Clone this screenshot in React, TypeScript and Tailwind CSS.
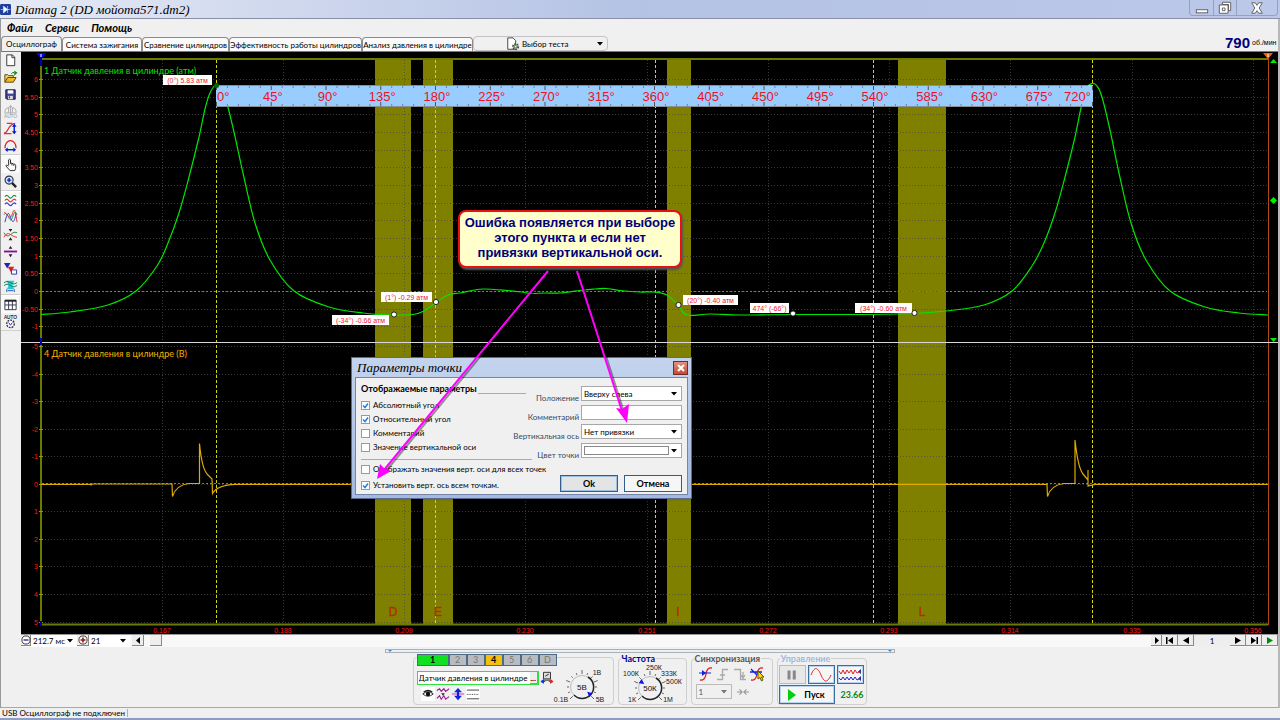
import { useState, type ReactNode } from "react";

type Pt = [number, number];

const X_GRID = [162, 283, 404, 525, 647, 768, 889, 1010, 1132, 1253];
const X_LABELS = ["0.167", "0.188", "0.209", "0.230", "0.251", "0.272", "0.293", "0.314", "0.335", "0.356"];
const BANDS = [
  { x: 375, w: 36, name: "D", tx: 393 },
  { x: 423, w: 30, name: "E", tx: 438 },
  { x: 667, w: 24, name: "I", tx: 678 },
  { x: 898, w: 48, name: "L", tx: 922 },
];
const CURSORS = [216.5, 435.5, 655.5, 873.5, 1092.5];
const upperRows = Array.from({ length: 15 }, (_, i) => {
  const v = 6 - i * 0.5;
  return { y: 79 + i * 17.67, label: Number.isInteger(v) ? String(v) : v.toFixed(2) };
});
const lowerRows = Array.from({ length: 11 }, (_, i) => ({ y: 346 + i * 27.55, label: String(i - 5) }));

const PRESSURE: Pt[] = [
  [41, 314.5], [70, 312], [108, 305], [136, 291], [157, 266], [168, 243], [179, 213], [188, 181], [199, 137],
  [205, 109], [210, 93], [216, 85], [222, 91], [226, 100], [234, 132], [243, 173], [255, 223], [270, 260],
  [294, 291], [329, 307], [363, 313], [393, 315], [413, 314.5], [424, 311], [434, 304], [448, 295], [460, 293], [472, 290.5],
  [484, 289], [507, 290.5], [522, 292], [531, 293.5], [545, 293], [560, 293], [583, 290], [594, 289], [606, 288.5], [620, 290.5],
  [640, 292], [655, 292], [667, 295], [678, 305], [687, 315], [710, 314], [740, 315], [793, 314.5], [850, 314.5],
  [914, 313.5], [946, 311], [984, 305], [1012, 291], [1032, 266], [1044, 243], [1055, 213], [1064, 181], [1075, 137],
  [1081, 108], [1087, 88], [1092, 83.5], [1097, 86], [1102, 97], [1110, 130], [1119, 173], [1131, 223], [1146, 260],
  [1170, 291], [1205, 307], [1239, 313], [1268, 315],
];

function smooth(p: Pt[]) {
  let d = `M${p[0][0]} ${p[0][1]}`;
  for (let i = 0; i < p.length - 1; i++) {
    const a = p[Math.max(0, i - 1)], b = p[i], c = p[i + 1], e = p[Math.min(p.length - 1, i + 2)];
    d += `C${b[0] + (c[0] - a[0]) / 6} ${b[1] + (c[1] - a[1]) / 6} ${c[0] - (e[0] - b[0]) / 6} ${c[1] - (e[1] - b[1]) / 6} ${c[0]} ${c[1]}`;
  }
  return d;
}

const TAGS = [
  { x: 163, y: 75, w: 49, t: "(0°) 5.83 атм" },
  { x: 381, y: 292, w: 51, t: "(1°) -0.29 атм" },
  { x: 332, y: 315, w: 57, t: "(-34°) -0.66 атм" },
  { x: 683, y: 295, w: 55, t: "(20°) -0.40 атм" },
  { x: 750, y: 303, w: 39, t: "474° (-66°)" },
  { x: 855, y: 303, w: 57, t: "(34°) -0.60 атм" },
];

function Chart() {
  return (
    <svg viewBox="21 52 1257 582" className="block h-auto w-full bg-black font-['Liberation_Sans',sans-serif]" role="img" aria-label="Осциллограмма">
      {BANDS.map((b) => (
        <rect key={b.name} x={b.x} y={59} width={b.w} height={566} fill="#808000" />
      ))}
      <g stroke="#4a4a4a" strokeDasharray="1 2" shapeRendering="crispEdges" opacity="0.75">
        {X_GRID.map((x) => <path key={x} d={`M${x + 0.5} 60V624`} />)}
        {[...upperRows, ...lowerRows].map((r) => <path key={r.y} d={`M42 ${Math.round(r.y) + 0.5}H1267`} />)}
      </g>
      <path d="M42 291.5H1267M42 483.5H1267" stroke="#8a8a00" strokeDasharray="2 2" shapeRendering="crispEdges" />
      <path d={CURSORS.map((x) => `M${x} 60V624`).join("")} stroke="#d6d600" strokeDasharray="3 2" shapeRendering="crispEdges" />
      <path d="M41 59V624.5H1268" fill="none" stroke="#6b7a00" strokeWidth="2" />
      <path d="M41 59H1268" stroke="#707c00" strokeWidth="2" />
      <path d="M1268.5 58V625" stroke="#b04a10" />
      <g stroke="#8a9a00">
        {[...upperRows, ...lowerRows].map((r) => <path key={r.y} d={`M39 ${Math.round(r.y) + 0.5}H43`} />)}
      </g>
      <g fill="#ff1818" fontSize="7" textAnchor="end">
        {[...upperRows, ...lowerRows].map((r) => <text key={r.y} x="38" y={r.y + 3}>{r.label}</text>)}
      </g>
      <g fill="#ff1818" fontSize="7" textAnchor="middle">
        {X_GRID.map((x, i) => <text key={x} x={x} y="633">{X_LABELS[i]}</text>)}
      </g>
      <g fill="#b03000" stroke="#b03000" strokeWidth="0.4" fontSize="12" textAnchor="middle">
        {BANDS.map((b) => <text key={b.name} x={b.tx} y="616">{b.name}</text>)}
      </g>
      <path d={smooth(PRESSURE)} fill="none" stroke="#00e600" strokeWidth="1.2" />
      <path
        d="M41 484.3H90L91 485L92 484H172L172.5 496.5Q176 485 189 483.5H199.5V443.5Q202 470 208 475L212 479L212.5 493.5Q217 485 236 484.3H1047L1047.5 496.5Q1051 485 1064 483.5H1075V440Q1078 468 1083 474L1088 480V470V486L1095 484.3H1268"
        fill="none" stroke="#e0aa00" strokeWidth="1.2"
      />
      <path d="M21 342.5H1278" stroke="#d8d8d8" />
      <g fontSize="9" className="font-['Lato',sans-serif]">
        <text x="44" y="74" fill="#00e400">1 Датчик давления в цилиндре (атм)</text>
        <text x="44" y="357" fill="#f0b400">4 Датчик давления в цилиндре (В)</text>
      </g>
      <rect x="216" y="85" width="877" height="22" fill="#99ccff" />
      <path d="M216 85.5H1088M216 106.5H1092" stroke="#8a8f96" />
      <g stroke="#555">
        {Array.from({ length: 81 }, (_, i) => {
          const x = 216.5 + i * 10.95;
          const l = i % 5 === 0 ? 4 : 2;
          return <path key={i} d={`M${x} 86v${l}M${x} 106v${-l}`} opacity={i % 5 === 0 ? 1 : 0.6} />;
        })}
      </g>
      <g fill="#f01020" fontSize="13">
        {Array.from({ length: 17 }, (_, i) => (
          <text key={i} x={i === 0 ? 217 : i === 16 ? 1091 : 218 + i * 54.75} y="101" textAnchor={i === 0 ? "start" : i === 16 ? "end" : "middle"}>
            {i * 45}°
          </text>
        ))}
      </g>
      <circle cx="216.5" cy="85.5" r="2.5" fill="#006400" />
      {TAGS.map((t) => (
        <g key={t.t}>
          <rect x={t.x} y={t.y} width={t.w} height="10" fill="#fff" />
          <text x={t.x + t.w / 2} y={t.y + 8} fontSize="7" fill="#f02030" textAnchor="middle">{t.t}</text>
        </g>
      ))}
      <g fill="#fff" stroke="#222">
        {[[394, 314.5], [436, 302], [678.5, 305], [793, 313.5], [914.5, 313]].map(([x, y]) => <circle key={x} cx={x} cy={y} r="2.6" />)}
      </g>
      <path d="M36 53H46L41 59Z" fill="#0000ff" />
      <path d="M41 58V66M41 338V345M41 621V626" stroke="#0000b0" strokeWidth="2" />
      <path d="M41 54V57" stroke="#fff" />
      <path d="M1263 53H1273L1268 59Z" fill="#f06010" />
      <path d="M1268 54V57" stroke="#fff" />
      <path d="M1270 63L1273.5 59L1277 63ZM1273.5 197L1277 200.5L1273.5 204L1270 200.5ZM1270 338H1277L1273.5 342Z" fill="#00ee00" />
    </svg>
  );
}

const wave = (y: number, a = 3) => `M2 ${y}q2-${a} 4 0t4 0t4 0`;

const TOOLS: { label: string; on?: boolean; icon: ReactNode }[][] = [
  [
    { label: "Новый", icon: <path d="M4 2H10L12.500 4.500V13.500H4ZM9.500 2V5H12.500" fill="#fff" stroke="#333" /> },
    { label: "Открыть", icon: <><path d="M2 13V5H5L6 6H11V8" fill="#f4d66a" stroke="#5a4600" /><path d="M2 13L5 8H14L11 13Z" fill="#f0b830" stroke="#5a4600" /><path d="M9 4Q10 2 12 3" stroke="#333" /><path d="M12 0.500L15.500 3L12 6Z" fill="#00a000" /></> },
    { label: "Сохранить", icon: <><path d="M3 3H13V13H4L3 12Z" fill="#44449a" stroke="#101040" /><path d="M5 3.500H11V7H5Z" fill="#fff" /><path d="M5.500 9.500H10.500V13H5.500Z" fill="#ddd" /><path d="M7 10V12" stroke="#222" /></> },
    { label: "Авто", icon: <><path d="M2 9Q2 4 6 4V9M14 9Q14 4 10 4V9M8 11V2M6 4L8 1.500L10 4M1.500 9.500H14.500" stroke="#aaa" /><text x="8" y="15" fontSize="5" fill="#999" textAnchor="middle">AUTO</text></> },
    { label: "Масштаб по вертикали", icon: <><path d="M1 13C6 13 5 3 13 2.500M4 2.500H10M1 13.500H9" stroke="#e03030" strokeWidth="1.300" /><path d="M12 4V13" stroke="#0020d0" strokeWidth="1.500" /><path d="M9.500 6L12 3L14.500 6ZM9.500 11L12 14L14.500 11Z" fill="#0020d0" /></> },
    { label: "Масштаб по горизонтали", icon: <><path d="M2 11C2 0 14 0 14 11" stroke="#e02020" strokeWidth="1.300" /><path d="M4 12.500H12" stroke="#0020d0" strokeWidth="1.500" /><path d="M5 10L2 12.500L5 15ZM11 10L14 12.500L11 15Z" fill="#0020d0" /></> },
  ],
  [
    { label: "Рука", on: true, icon: <path d="M6 9V3Q7 1.500 8 3V7L9.500 6.500L11 7.500L12.500 7.500L13.500 9V12L12.500 14.500H7.500L3 9.500Q3.500 8 5 9L6 10M9.500 7V9M11.500 8V9.500" fill="#fff" stroke="#222" /> },
    { label: "Лупа", icon: <><path d="M9.500 9.500L14 14" stroke="#222" strokeWidth="2.500" /><circle cx="6.500" cy="6.500" r="4.300" fill="#c8e8ff" stroke="#334" strokeWidth="1.200" /><path d="M6.500 4.300V8.700M4.300 6.500H8.700" stroke="#1020b0" strokeWidth="1.500" /></> },
  ],
  [
    { label: "Раздельно", on: true, icon: <><path d={wave(4)} stroke="#209040" strokeWidth="1.300" /><path d={wave(8)} stroke="#e03030" strokeWidth="1.300" /><path d={wave(12)} stroke="#3030d0" strokeWidth="1.300" /></> },
    { label: "Вместе", icon: <><path d="M1 5C5-1 7 17 10 8S13 3 15 5" stroke="#209040" /><path d="M1 3C4 1 7 14 10 4S14 8 15 13" stroke="#e03030" /><path d="M2 13C5 1 6 2 8 8S12 15 14 3" stroke="#3030d0" /></> },
    { label: "Центрировать", icon: <><path d="M1 6Q4 12 8 8T15 6" stroke="#209040" /><path d="M1 11Q4 5 8 8T15 11" stroke="#e03030" /><path d="M6 2H10L8 5ZM6 14H10L8 11Z" fill="#222" /></> },
    { label: "Разделитель", icon: <><path d="M1 8H15" stroke="#8a10a0" strokeWidth="2" /><path d="M6 5H10L8 2ZM6 11H10L8 14Z" fill="#222" /></> },
    { label: "Маркеры", icon: <><path d="M1 2H8L4.500 8Z" fill="#2020c0" /><path d="M5 6H12L8.500 12Z" fill="#e02020" /><path d="M9 9.500H14.500V14H9Z" fill="#fff" stroke="#3030b0" /></> },
    { label: "Диапазон", icon: <><path d="M4 3H12L10 8L12 12H4L6 8Z" fill="#20c8d8" /><path d="M1 5Q4 2 8 5T15 5M1 8Q4 5 8 8T15 8" stroke="#108050" /><path d="M4 12V15M12 12V15M5 13.500H11" stroke="#2050c0" /></> },
  ],
  [
    { label: "Таблица", on: true, icon: <><path d="M2 3.500H14V13.500H2ZM6 3.500V13.500M10 3.500V13.500M2 8.500H14" fill="#fff" stroke="#334" /><path d="M2 4H14" stroke="#223" strokeWidth="2" /></> },
    { label: "Автоизмерение", icon: <><text x="8" y="5" fontSize="5" fontWeight="700" fill="#222" textAnchor="middle">AUTO</text><circle cx="8" cy="10.500" r="4" fill="#fff" stroke="#333" strokeWidth="1.500" strokeDasharray="2 1" /><path d="M6 9L8 12L10 9" stroke="#2020d0" /></> },
  ],
];

function Icon({ children, className = "size-4" }: { children: ReactNode; className?: string }) {
  return <svg viewBox="0 0 16 16" fill="none" className={`${className} shrink-0`} aria-hidden="true">{children}</svg>;
}

function Caret({ className = "" }: { className?: string }) {
  return <svg viewBox="0 0 6 4" className={`pointer-events-none absolute top-1/2 right-1 h-1 w-1.5 -translate-y-1/2 fill-black ${className}`} aria-hidden="true"><path d="M0 0H6L3 3.500Z" /></svg>;
}

function Pick({ label, value, options, className, id, caret }: { label?: string; value: string; options?: string[]; className: string; id?: string; caret?: string }) {
  return (
    <span className={`relative flex ${className}`}>
      <select id={id} aria-label={label} defaultValue={value} className="w-full appearance-none bg-transparent px-0.5 text-[8px] leading-3 outline-none">
        {(options ?? [value]).map((o) => <option key={o}>{o}</option>)}
      </select>
      <Caret className={caret} />
    </span>
  );
}

function Check({ label, checked }: { label: string; checked?: boolean }) {
  return (
    <label className="flex h-3.5 items-center gap-[3px] text-[8px] whitespace-nowrap">
      <span className="relative flex size-[9px]">
        <input type="checkbox" defaultChecked={checked} className="peer size-[9px] appearance-none border border-[#9a9a9a] bg-white" />
        <svg viewBox="0 0 9 9" className="pointer-events-none absolute inset-0 hidden fill-none stroke-[#2b7de0] stroke-[1.5] peer-checked:block" aria-hidden="true"><path d="M2 4.500L4 6.500L7 2.500" /></svg>
      </span>
      {label}
    </label>
  );
}

function Field({ label, id, children }: { label: string; id: string; children: ReactNode }) {
  return (
    <div className="flex h-[19px] items-start justify-end gap-0.5 last:h-4">
      <label htmlFor={id} className="pt-[7px] text-[8px] leading-[10px] whitespace-nowrap text-[#3c4a63]">{label}</label>
      {children}
    </div>
  );
}

function Dialog() {
  const box = "h-[15px] w-[101px] shrink-0 border border-[#a8a8a8] bg-white";
  return (
    <section role="dialog" aria-label="Параметры точки" className="absolute top-[305px] left-[330px] flex w-[341px] flex-col border border-[#5a6a90] bg-gradient-to-b from-[#c4d4ee] to-[#a3b9e2] px-[3px] pb-[3px] shadow">
      <header className="flex h-[19px] items-center justify-between pl-0.5">
        <h2 className="font-['Liberation_Serif',serif] text-[13px] leading-none italic">Параметры точки</h2>
        <button aria-label="Закрыть" className="flex h-3.5 w-[15px] items-center justify-center border border-[#7a2a20] bg-gradient-to-b from-[#e0917f] to-[#c04a33]">
          <svg viewBox="0 0 10 10" className="size-2.5 stroke-white stroke-2" aria-hidden="true"><path d="M2 2L8 8M8 2L2 8" /></svg>
        </button>
      </header>
      <div className="flex flex-col border border-[#7485a8] bg-[#f0f0f0] px-[5px] pt-1 pb-0.5">
        <div className="flex justify-between">
          <div className="flex flex-col">
            <div className="flex h-4 gap-2">
              <h3 className="w-[109px] text-[9px] leading-[14px] font-bold whitespace-nowrap">Отображаемые параметры</h3>
              <span className="h-3 w-12 border-b border-[#aaa]" />
            </div>
            <Check label="Абсолютный угол" checked />
            <Check label="Относительный угол" checked />
            <Check label="Комментарий" />
            <Check label="Значение вертикальной оси" />
          </div>
          <div className="-ml-4 flex flex-col pt-1">
            <Field label="Положение" id="pos"><Pick id="pos" value="Вверху слева" options={["Вверху слева", "Вверху справа", "Внизу слева"]} className={box} /></Field>
            <Field label="Комментарий" id="note"><input id="note" className={box} /></Field>
            <Field label="Вертикальная ось" id="axis"><Pick id="axis" value="Нет привязки" className={box} /></Field>
            <Field label="Цвет точки" id="color">
              <span className={`${box} relative flex items-center pl-0.5`}>
                <button id="color" aria-label="Цвет точки" className="h-[9px] w-[85px] border border-[#888] bg-white" />
                <Caret />
              </span>
            </Field>
          </div>
        </div>
        <div className="flex items-end justify-between">
          <div className="flex flex-col gap-0.5">
            <hr className="w-[171px] border-[#aaa]" />
            <Check label="Отображать значения верт. оси для всех точек" />
            <Check label="Установить верт. ось всем точкам." checked />
          </div>
          <div className="flex gap-1.5 text-[9px] font-bold">
            <button className="h-[17px] w-[58px] border border-[#2f5f8f] bg-[#e4e4e4] shadow-[inset_0_0_0_1px_#9fc0e0]">Ok</button>
            <button className="h-[17px] w-[58px] border border-[#2f5f8f] bg-[#f6f6f6]">Отмена</button>
          </div>
        </div>
      </div>
    </section>
  );
}

function Annotations() {
  return (
    <>
      <p className="absolute top-[158px] left-[437px] w-56 rounded-lg border-2 border-[#e81010] bg-[#ffffcc] pt-[3px] pb-1.5 text-center font-['Liberation_Sans',sans-serif] text-[13px] leading-[15px] font-bold whitespace-nowrap text-[#00007a] shadow-[1px_2px_2px_#555]">
        Ошибка появляется при выборе<br />этого пункта и если нет<br />привязки вертикальной оси.
      </p>
      <svg viewBox="21 52 1257 582" className="pointer-events-none absolute inset-0 h-auto w-full" aria-hidden="true">
        <path d="M550 272L386 471M579 272L624 412" stroke="#0006" strokeWidth="2" />
        <path d="M548 271L384 470M577 271L622 411" stroke="#ff00ff" strokeWidth="2" />
        <path d="M377 479L380 464L384 468L391 471ZM627 423L616 408L622 409L629 404Z" fill="#ff00ff" />
      </svg>
    </>
  );
}

function Group({ title, tone = "", className, children }: { title?: string; tone?: string; className: string; children: ReactNode }) {
  return (
    <fieldset className={`rounded-sm border border-[#cfcfcf] ${className}`}>
      {title && <legend className={`ml-0.5 px-px text-[9px] leading-[7px] font-bold ${tone}`}>{title}</legend>}
      {children}
    </fieldset>
  );
}

function Knob({ cx, cy, value, angle, labels, ...box }: { cx: number; cy: number; value: string; angle: number; labels: [string, number, number][]; width: number; height: number }) {
  return (
    <svg width={box.width} height={box.height} viewBox={`0 0 ${box.width} ${box.height}`} className="overflow-visible font-['Liberation_Sans',sans-serif]" role="img" aria-label={value}>
      <g stroke="#666">
        {Array.from({ length: 13 }, (_, i) => {
          const a = ((135 + i * 22.5) * Math.PI) / 180;
          const r = i % 3 === 0 ? 17 : 15;
          return <path key={i} d={`M${cx + 13 * Math.cos(a)} ${cy + 13 * Math.sin(a)}L${cx + r * Math.cos(a)} ${cy + r * Math.sin(a)}`} />;
        })}
      </g>
      <circle cx={cx} cy={cy} r="11.500" fill="#f0f0f0" stroke="#bbb" />
      <path d={`M${cx + 6} ${cy - 10}A11.500 11.500 0 1 1 ${cx - 8} ${cy + 8}`} fill="none" stroke="#222" strokeWidth="1.500" />
      <path d="M7 0L12-2.500V2.500Z" fill="#1010f0" transform={`translate(${cx} ${cy}) rotate(${angle})`} />
      <text x={cx} y={cy + 3} fontSize="8" textAnchor="middle" fill="#111">{value}</text>
      <g fontSize="7" textAnchor="middle" fill="#222">
        {labels.map(([t, x, y]) => <text key={t} x={x} y={y}>{t}</text>)}
      </g>
    </svg>
  );
}

function Channels() {
  const [active, setActive] = useState(["1", "4"]);
  const toggle = (n: string) => setActive((a) => (a.includes(n) ? a.filter((x) => x !== n) : [...a, n]));
  return (
    <div className="-mt-1 flex">
      {["1", "2", "3", "4", "5", "6", "D"].map((n) => {
        const tone = !active.includes(n) ? "bg-[#b8bcc0] text-[#777]" : n === "4" ? "bg-[#f4c010] font-bold" : "bg-[#10e020] font-bold";
        return (
          <button key={n} onClick={() => toggle(n)} aria-pressed={active.includes(n)} className={`h-3 border border-[#4a6a8a] text-[9px] leading-[10px] ${tone} ${n === "1" ? "w-8" : "w-[18px]"}`}>
            {n}
          </button>
        );
      })}
    </div>
  );
}

function ControlPanel() {
  const blueBtn = "flex items-center justify-center border border-[#3a6ea0] bg-[#f6f6f6] shadow-[inset_0_0_0_1px_#b8d4f0]";
  return (
    <div className="flex flex-1 flex-col items-center border-b border-[#a8a8a8] pb-0.5">
      <button aria-label="Свернуть панель" className="mt-0.5 flex h-1 w-[510px] items-center justify-between border border-[#b0b0b0] bg-[#e4f0fa] px-0.5">
        <svg viewBox="0 0 4 2" className="h-0.5 w-1 fill-[#3090e0]" aria-hidden="true"><path d="M0 0H4L2 2Z" /></svg>
        <svg viewBox="0 0 4 2" className="h-0.5 w-1 fill-[#3090e0]" aria-hidden="true"><path d="M0 0H4L2 2Z" /></svg>
      </button>
      <div className="mt-auto flex items-end gap-1">
        <Group className="flex h-12 w-[201px] px-[3px]">
          <div className="flex flex-col">
            <Channels />
            <div className="mt-[5px] flex items-center gap-px">
              <div className="flex h-3.5 w-[122px] items-center border border-[#30e040] bg-white">
                <input aria-label="Датчик" defaultValue="Датчик давления в цилиндре" className="w-full min-w-0 pl-px text-[8px] leading-3 outline-none" />
                <button aria-label="Выбрать датчик" className="h-3 w-2 shrink-0 border-r border-b border-[#999] bg-[#eee] text-[8px] leading-[8px] font-bold">...</button>
              </div>
              <button aria-label="Подключение"><Icon className="size-3.5"><path d="M4 1.500H12V9H4Z" fill="#ddd" stroke="#222" /><path d="M6 6L10 3.500M3 10.500H13" stroke="#222" /><path d="M1 12L4 10V14ZM4 12H6" fill="#1030e0" stroke="#1030e0" /><path d="M15 12L12 10V14ZM12 12H10" fill="#e02020" stroke="#e02020" /></Icon></button>
            </div>
            <div className="mt-0.5 flex gap-px pl-1">
              <button aria-label="Видимость" className="bg-white"><Icon className="size-3.5"><path d="M2 8Q8 3 14 8Q8 13 2 8Z" stroke="#222" /><circle cx="8" cy="8" r="2.500" fill="#111" /><path d="M3 6Q8 2 13 6" stroke="#222" strokeWidth="1.500" /></Icon></button>
              <button aria-label="Сигнал"><Icon className="size-3.5"><path d="M1 4L4 2L6 5L9 2L11 5L15 2M1 13L4 10L6 14L9 10L11 14L15 11" stroke="#a02090" strokeWidth="1.300" /><path d="M6 7H10L8 10Z" fill="#222" /></Icon></button>
              <button aria-label="Смещение"><Icon className="size-3.5"><path d="M1 8H15" stroke="#c030a0" /><path d="M8 4V12" stroke="#1020e0" strokeWidth="2.500" /><path d="M3.500 6L8 1L12.500 6ZM3.500 10L8 15L12.500 10Z" fill="#1020e0" /></Icon></button>
              <button aria-label="Линии" className="bg-white"><Icon className="size-3.5"><path d="M1 3.500H15M1 13.500H15" stroke="#333" /><path d="M1 8.500H15" stroke="#333" strokeDasharray="1 1" /></Icon></button>
            </div>
          </div>
          <Knob width={53} height={44} cx={25} cy={29} value="5В" angle={42} labels={[["1В", 40, 17], ["0.1В", 4, 44], ["5В", 43, 44]]} />
        </Group>
        <Group title="Частота" tone="text-[#00008a]" className="h-[50px] w-[69px]">
          <Knob width={66} height={39} cx={31} cy={26} value="50К" angle={215} labels={[["100К", 12, 14], ["250К", 35, 8], ["333К", 50, 14], ["500К", 55, 22], ["1К", 13, 40], ["1М", 49, 40]]} />
        </Group>
        <Group title="Синхронизация" tone="text-[#555]" className="h-[50px] w-[82px]">
          <div className="flex justify-between px-1.5 pt-1">
            <button aria-label="По фронту"><Icon><path d="M2 14Q7 15 8 8T14 2" stroke="#e02020" strokeWidth="1.300" /><path d="M1 7H13" stroke="#1020e0" /><path d="M4 4L8 7L4 10Z" fill="#1020e0" /></Icon></button>
            <button aria-label="Нарастание" disabled><Icon><path d="M2 13.500H7.500V3.500H13M5 9H10" stroke="#aaa" strokeWidth="1.300" /></Icon></button>
            <button aria-label="Спад" disabled><Icon><path d="M2 3.500H8.500V13.500H14M11 6V11M9 9L11 12L13 9" stroke="#aaa" strokeWidth="1.300" /></Icon></button>
            <button aria-label="По курсору"><Icon><path d="M2 14Q7 15 8 8T14 2" stroke="#e02020" strokeWidth="1.300" /><path d="M1 6H13M2 3L8 9" stroke="#1020e0" strokeWidth="1.300" /><path d="M9 5V13L11 11.500L12.500 15L14 14L12.500 11H15Z" fill="#f8e000" stroke="#665500" /></Icon></button>
          </div>
          <div className="flex items-center gap-1 pt-0.5 pl-1 text-[#555]">
            <Pick label="Канал синхронизации" value="1" options={["1", "4"]} className="h-[15px] w-9 border border-[#bbb]" caret="opacity-50" />
            <Icon className="size-3.5"><path d="M1 8H6M15 8H10M4 5L7 8L4 11M12 5L9 8L12 11" stroke="#999" strokeWidth="1.300" /></Icon>
          </div>
        </Group>
        <Group title="Управление" tone="text-[#9dbbe0]" className="h-[50px] w-[90px]">
          <div className="flex gap-0.5 px-px pt-[3px]">
            <button aria-label="Пауза" className="flex h-[19px] w-[27px] items-center justify-center border border-[#bbb] bg-[#e8e8e8]"><Icon className="size-3"><path d="M4 2V14M11 2V14" stroke="#888" strokeWidth="4" /></Icon></button>
            <button aria-label="Синусоида" className={`h-[19px] w-[27px] ${blueBtn}`}><svg viewBox="0 0 22 16" className="h-4 w-[22px] fill-none stroke-[#e02020]" aria-hidden="true"><path d="M1 8C5-2 8 1 11 8S17 17 21 8" /></svg></button>
            <button aria-label="Запись" className={`h-[19px] w-[27px] ${blueBtn}`}><svg viewBox="0 0 24 16" className="h-4 w-6 fill-none" aria-hidden="true"><path d="M1 4L3 7L5 3L7 7L9 3L11 6L13 3L15 7L17 3L19 6L23 4" stroke="#e02020" /><path d="M1 11L3 13L5 10L7 13L9 10L11 13L13 10L15 13L17 10L19 13L23 11" stroke="#2020e0" /><path d="M23 2L20 4.500L23 7ZM23 9L20 11.500L23 14Z" fill="#3030a0" /></svg></button>
          </div>
          <div className="mt-px flex items-center gap-1.5 px-px">
            <button className={`h-[19px] w-14 gap-2 text-[9px] font-bold ${blueBtn}`}>
              <svg viewBox="0 0 8 12" className="h-3 w-2 fill-[#00d010]" aria-hidden="true"><path d="M0 0L8 6L0 12Z" /></svg>
              Пуск
            </button>
            <output className="text-[9px] font-bold text-[#0a8a10]">23.66</output>
          </div>
        </Group>
      </div>
    </div>
  );
}

function ScrollRow() {
  const btn = "flex h-[11px] items-center justify-center border-r border-b border-[#888] bg-[#eee]";
  const glyph = "h-[7px] w-2.5";
  return (
    <div className="flex h-[13px] items-start border-t border-[#999] bg-[#f8f8f8]">
      <button aria-label="Уменьшить масштаб" className={`${btn} w-2.5`}><Icon className="size-2.5"><circle cx="8" cy="8" r="6.500" fill="#fff" stroke="#333" strokeWidth="1.500" /><path d="M4 8H12" stroke="#1010a0" strokeWidth="2" /></Icon></button>
      <Pick label="Длительность" value="212.7 мс" className="h-3 w-[46px] bg-white" />
      <button aria-label="Увеличить масштаб" className={`${btn} w-3`}><Icon className="size-2.5"><circle cx="8" cy="8" r="6.500" fill="#fff" stroke="#333" strokeWidth="1.500" /><path d="M4 8H12M8 4V12" stroke="#a01010" strokeWidth="2.500" /></Icon></button>
      <Pick label="Масштаб" value="21" className="h-3 w-[41px] bg-white" />
      <button aria-label="Влево" className={`${btn} ml-0.5 w-3`}><svg viewBox="0 0 10 7" className={glyph} aria-hidden="true"><path d="M7 0V7L3 3.500Z" /></svg></button>
      <div className="flex-1 pl-1.5"><div className={`${btn} w-3`} /></div>
      <button aria-label="Вправо" className={`${btn} w-[11px]`}><svg viewBox="0 0 10 7" className={glyph} aria-hidden="true"><path d="M4 0V7L8 3.500Z" /></svg></button>
      <button aria-label="Первая" className={`${btn} w-4`}><svg viewBox="0 0 10 7" className={glyph} aria-hidden="true"><path d="M1 0H2.500V7H1ZM8 0V7L3 3.500Z" /></svg></button>
      <button aria-label="Предыдущая" className={`${btn} w-4`}><svg viewBox="0 0 10 7" className={glyph} aria-hidden="true"><path d="M8 0V7L2 3.500Z" /></svg></button>
      <span className="w-9 bg-[#eee] text-center text-[8px] leading-3">1</span>
      <button aria-label="Следующая" className={`${btn} w-4`}><svg viewBox="0 0 10 7" className={glyph} aria-hidden="true"><path d="M2 0V7L8 3.500Z" /></svg></button>
      <button aria-label="Последняя" className={`${btn} w-4`}><svg viewBox="0 0 10 7" className={glyph} aria-hidden="true"><path d="M9 0H7.500V7H9ZM2 0V7L7 3.500Z" /></svg></button>
      <button aria-label="Воспроизвести" className={`${btn} w-4`}><svg viewBox="0 0 10 7" className={`${glyph} fill-[#008a00]`} aria-hidden="true"><path d="M2 0V7L8 3.500Z" /></svg></button>
    </div>
  );
}

const TABS: [string, string][] = [
  ["Осциллограф", "w-[61px] h-[15px]"],
  ["Система зажигания", "w-20 h-3.5"],
  ["Сравнение цилиндров", "w-[87px] h-3.5"],
  ["Эффективность работы цилиндров", "w-[133px] h-3.5"],
  ["Анализ давления в цилиндре", "w-[111px] h-3.5"],
];

export default function App() {
  const [tab, setTab] = useState(0);
  return (
    <div className="flex min-h-screen flex-col overflow-x-hidden bg-[#f0f0f0] font-['Lato',sans-serif] text-black">
      <header className="flex h-[19px] items-center justify-between border-b border-[#8a90a8] bg-gradient-to-r from-[#e6eaf5] via-[#b4c2e4] to-[#bcc8ea]">
        <div className="flex items-center gap-1">
          <Icon className="size-[11px]"><rect width="16" height="16" rx="2" fill="#1c3f9c" /><path d="M1 8H5V3L11 8L5 13V8M11 3V13M11 8H15" fill="#fff" stroke="#cfe0ff" /></Icon>
          <h1 className="font-['Liberation_Serif',serif] text-[13px] leading-none italic">Diamag 2 (DD мойота571.dm2)</h1>
        </div>
        <div className="mr-0.5 flex h-4 self-start rounded-b border border-t-0 border-[#98a0bc]">
          <button aria-label="Свернуть" className="flex w-6 items-center justify-center border-r border-[#98a0bc]"><Icon className="size-3.5"><rect x="1.500" y="10" width="13" height="3.500" fill="#fff" stroke="#555" /></Icon></button>
          <button aria-label="Восстановить" className="flex w-[23px] items-center justify-center border-r border-[#98a0bc]"><Icon className="size-3.5"><path d="M5 1.500H14.500V11H12V4H5Z" fill="#fff" stroke="#555" /><path d="M1.500 4.500H11.500V14H1.500ZM5 8H8V11H5Z" fill="#fff" stroke="#555" /></Icon></button>
          <button aria-label="Закрыть" className="flex w-10 items-center justify-center"><Icon className="size-3.5"><path d="M2 2H6L8 5L10 2H14L10.500 8L14 14H10L8 11L6 14H2L5.500 8Z" fill="#fff" stroke="#555" /></Icon></button>
        </div>
      </header>

      <div className="flex flex-1 flex-col border-r-2 border-l border-r-[#b8b8b8] border-l-[#999]">
        <nav className="flex h-[17px] items-center gap-3 pl-1.5 text-[11px] leading-none font-bold italic">
          <button>Файл</button>
          <button>Сервис</button>
          <button>Помощь</button>
        </nav>
        <div className="flex h-4 items-end border-b border-[#777]">
          <div role="tablist" className="flex items-end">
            {TABS.map(([name, size], i) => (
              <button key={name} role="tab" aria-selected={tab === i} onClick={() => setTab(i)} className={`flex items-center justify-center rounded-t-sm border border-b-0 border-[#8c8c8c] text-[8px] whitespace-nowrap ${size} ${tab === i ? "bg-[#f0f0f0]" : "bg-[#fafafa]"}`}>
                {name}
              </button>
            ))}
          </div>
          <button className="relative flex h-[15px] w-[135px] items-center gap-0.5 rounded-sm border border-[#c4c4c4] pl-8 text-[8px]">
            <Icon className="size-3.5"><path d="M2 1H8L11 4V14H2Z" fill="#fff" stroke="#333" /><circle cx="11" cy="11" r="3" fill="#dfe8df" stroke="#444" strokeWidth="2" strokeDasharray="2 1" /><circle cx="11" cy="11" r="1.500" stroke="#3a7a3a" /></Icon>
            Выбор теста
            <Caret />
          </button>
          <p className="ml-auto flex h-4 w-[53px] items-center gap-0.5 font-['Liberation_Sans',sans-serif] whitespace-nowrap">
            <span className="text-[15px] font-bold text-[#00007a]">790</span>
            <span className="text-[7px]">об./мин</span>
          </p>
        </div>

        <div className="flex">
          <div role="toolbar" aria-label="Инструменты" className="flex w-5 shrink-0 flex-col">
            {TOOLS.map((group, g) => (
              <div key={g} className={`flex flex-col border-b border-[#d0d0d0] ${g > 0 ? "border-t border-t-white" : ""}`}>
                {group.map((t) => (
                  <button key={t.label} aria-label={t.label} title={t.label} className={`flex h-[17px] w-[18px] items-center justify-center ${t.on ? "bg-[#fafafa]" : ""}`}>
                    <Icon className="size-[15px]">{t.icon}</Icon>
                  </button>
                ))}
              </div>
            ))}
          </div>
          <div className="min-w-0 flex-1">
            <div className="relative">
              <Chart />
              <Dialog />
              <Annotations />
            </div>
            <ScrollRow />
          </div>
        </div>

        <ControlPanel />
      </div>

      <footer className="flex h-3 items-center border-b-2 border-[#8f9cc8] text-[8px] leading-none">
        <span className="w-32 border-r border-[#b0b0b0] pl-0.5 whitespace-nowrap">USB Осциллограф не подключен</span>
      </footer>
    </div>
  );
}
